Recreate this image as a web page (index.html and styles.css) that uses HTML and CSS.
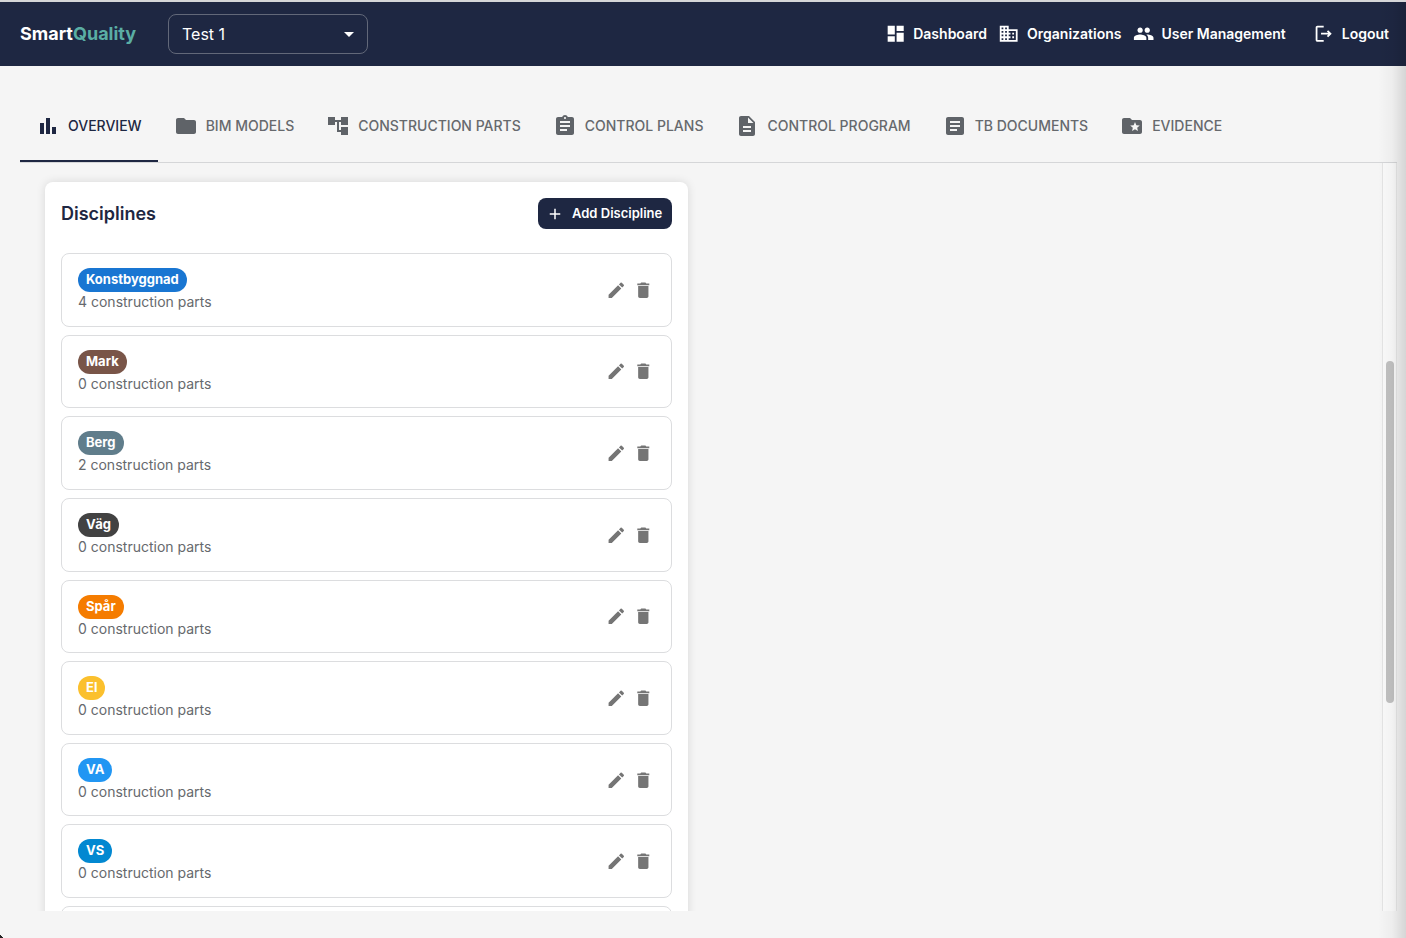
FILE: index.html
```
<!DOCTYPE html>
<html lang="en">
<head>
<meta charset="utf-8">
<title>SmartQuality</title>
<link rel="stylesheet" href="styles.css">
</head>
<body>
<svg width="0" height="0" class="defs">
  <symbol id="edit" viewBox="0 0 24 24"><path d="M3 17.25V21h3.75L17.81 9.94l-3.75-3.75zM20.71 7.04c.39-.39.39-1.02 0-1.41l-2.34-2.34a.9959.9959 0 0 0-1.41 0l-1.83 1.83 3.75 3.75z"/></symbol>
  <symbol id="trash" viewBox="0 0 24 24"><path d="M6 19c0 1.1.9 2 2 2h8c1.1 0 2-.9 2-2V7H6zM19 4h-3.5l-1-1h-5l-1 1H5v2h14z"/></symbol>
</svg>
<div class="app">
  <header class="header">
    <div class="brand">Smart<span class="brand-accent">Quality</span></div>
    <div class="select"><span>Test 1</span><svg class="caret" viewBox="0 0 24 24"><path d="m7 10 5 5 5-5z"/></svg></div>
    <nav class="nav">
      <a class="nav-item"><svg viewBox="0 0 24 24"><path d="M3 13h8V3H3zm0 8h8v-6H3zm10 0h8V11h-8zm0-18v6h8V3z"/></svg><span>Dashboard</span></a>
      <a class="nav-item"><svg viewBox="0 0 24 24"><path d="M12 7V3H2v18h20V7zM6 19H4v-2h2zm0-4H4v-2h2zm0-4H4V9h2zm0-4H4V5h2zm4 12H8v-2h2zm0-4H8v-2h2zm0-4H8V9h2zm0-4H8V5h2zm10 12h-8v-2h2v-2h-2v-2h2v-2h-2V9h8zm-2-8h-2v2h2zm0 4h-2v2h2z"/></svg><span>Organizations</span></a>
      <a class="nav-item"><svg viewBox="0 0 24 24"><path d="M16 11c1.66 0 2.99-1.34 2.99-3S17.66 5 16 5s-3 1.34-3 3 1.34 3 3 3m-8 0c1.66 0 2.99-1.34 2.99-3S9.66 5 8 5 5 6.34 5 8s1.340 3 3 3m0 2c-2.330 0-7 1.170-7 3.500V19h14v-2.500c0-2.330-4.670-3.500-7-3.500m8 0c-.29 0-.62.02-.97.050 1.160.840 1.970 1.970 1.970 3.450V19h6v-2.500c0-2.330-4.670-3.500-7-3.500"/></svg><span>User Management</span></a>
      <a class="nav-item nav-logout"><svg viewBox="0 0 24 24"><path d="m17 8-1.410 1.410L17.170 11H9v2h8.170l-1.580 1.580L17 16l4-4zM5 5h7V3H5c-1.100 0-2 .9-2 2v14c0 1.100.9 2 2 2h7v-2H5z"/></svg><span>Logout</span></a>
    </nav>
  </header>

  <div class="tabs">
    <div class="tab active"><svg viewBox="0 0 24 24"><path d="M4 9h4v11H4zm12 4h4v7h-4zm-6-9h4v16h-4z"/></svg><span>OVERVIEW</span></div>
    <div class="tab"><svg viewBox="0 0 24 24"><path d="M10 4H4c-1.100 0-1.990.9-1.990 2L2 18c0 1.100.9 2 2 2h16c1.100 0 2-.9 2-2V8c0-1.100-.9-2-2-2h-8z"/></svg><span>BIM MODELS</span></div>
    <div class="tab"><svg viewBox="0 0 24 24"><path d="M22 11V3h-7v3H9V3H2v8h7V8h2v10h4v3h7v-8h-7v3h-2V8h2v3z"/></svg><span>CONSTRUCTION PARTS</span></div>
    <div class="tab"><svg viewBox="0 0 24 24"><path d="M19 3h-4.180C14.400 1.840 13.300 1 12 1s-2.400.840-2.820 2H5c-1.100 0-2 .9-2 2v14c0 1.100.9 2 2 2h14c1.100 0 2-.9 2-2V5c0-1.100-.9-2-2-2m-7 0c.55 0 1 .45 1 1s-.45 1-1 1-1-.45-1-1 .45-1 1-1m2 14H7v-2h7zm3-4H7v-2h10zm0-4H7V7h10z"/></svg><span>CONTROL PLANS</span></div>
    <div class="tab"><svg viewBox="0 0 24 24"><path d="M14 2H6c-1.100 0-1.990.9-1.990 2L4 20c0 1.100.890 2 1.990 2H18c1.100 0 2-.9 2-2V8zm2 16H8v-2h8zm0-4H8v-2h8zm-3-5V3.500L18.500 9z"/></svg><span>CONTROL PROGRAM</span></div>
    <div class="tab"><svg viewBox="0 0 24 24"><path d="M19 3H5c-1.100 0-2 .9-2 2v14c0 1.100.9 2 2 2h14c1.100 0 2-.9 2-2V5c0-1.100-.9-2-2-2m-5 14H7v-2h7zm3-4H7v-2h10zm0-4H7V7h10z"/></svg><span>TB DOCUMENTS</span></div>
    <div class="tab"><svg viewBox="0 0 24 24"><path d="M20 6h-8l-2-2H4c-1.100 0-2 .9-2 2v12c0 1.100.9 2 2 2h16c1.100 0 2-.9 2-2V8c0-1.100-.9-2-2-2m-2.060 11L15 15.280 12.060 17l.780-3.330-2.590-2.240 3.410-.290L15 8l1.340 3.140 3.410.290-2.590 2.240z"/></svg><span>EVIDENCE</span></div>
  </div>

  <div class="viewport">
    <div class="content">
      <section class="panel">
        <div class="panel-head">
          <h2 class="title">Disciplines</h2>
          <button class="add"><svg viewBox="0 0 24 24"><path d="M19 13h-6v6h-2v-6H5v-2h6V5h2v6h6z"/></svg><span>Add Discipline</span></button>
        </div>
        <div class="list">
          <div class="row"><div class="info"><span class="chip konst">Konstbyggnad</span><span class="count">4 construction parts</span></div><div class="actions"><svg><use href="#edit"/></svg><svg><use href="#trash"/></svg></div></div>
          <div class="row"><div class="info"><span class="chip mark">Mark</span><span class="count">0 construction parts</span></div><div class="actions"><svg><use href="#edit"/></svg><svg><use href="#trash"/></svg></div></div>
          <div class="row"><div class="info"><span class="chip berg">Berg</span><span class="count">2 construction parts</span></div><div class="actions"><svg><use href="#edit"/></svg><svg><use href="#trash"/></svg></div></div>
          <div class="row"><div class="info"><span class="chip vag">Väg</span><span class="count">0 construction parts</span></div><div class="actions"><svg><use href="#edit"/></svg><svg><use href="#trash"/></svg></div></div>
          <div class="row"><div class="info"><span class="chip spar">Spår</span><span class="count">0 construction parts</span></div><div class="actions"><svg><use href="#edit"/></svg><svg><use href="#trash"/></svg></div></div>
          <div class="row"><div class="info"><span class="chip el">El</span><span class="count">0 construction parts</span></div><div class="actions"><svg><use href="#edit"/></svg><svg><use href="#trash"/></svg></div></div>
          <div class="row"><div class="info"><span class="chip va">VA</span><span class="count">0 construction parts</span></div><div class="actions"><svg><use href="#edit"/></svg><svg><use href="#trash"/></svg></div></div>
          <div class="row"><div class="info"><span class="chip vs">VS</span><span class="count">0 construction parts</span></div><div class="actions"><svg><use href="#edit"/></svg><svg><use href="#trash"/></svg></div></div>
          <div class="row"></div>
        </div>
      </section>
    </div>
    <div class="scrollbar"><div class="thumb"></div></div>
  </div>
  <div class="edge-shade"></div>
  <div class="corner"></div>
</div>
</body>
</html>
```
FILE: styles.css
```
* { box-sizing: border-box; }
body { margin: 0; font-family: Inter, "Liberation Sans", sans-serif; background: #f5f5f5; }
svg { display: block; flex: none; fill: currentColor; }
.defs { position: absolute; }
.app { position: relative; width: 1406px; height: 938px; overflow: hidden; display: flex; flex-direction: column; border-top: 2px solid #d5d6d8; }

.header { height: 64px; flex: none; background: #1e2742; color: #fff; display: flex; align-items: center; padding: 0 17px 0 20px; }
.brand { width: 148px; padding-bottom: 2px; font-size: 18px; font-weight: 700; white-space: nowrap; }
.brand-accent { color: #5aaea4; }
.select { width: 200px; height: 40px; border: 1px solid #626879; border-radius: 8px; display: flex; align-items: center; justify-content: space-between; padding: 0 6px 0 13px; font-size: 16px; }
.caret { width: 24px; height: 24px; }
.nav { margin-left: auto; display: flex; align-items: center; gap: 11.300px; font-size: 14px; font-weight: 600; white-space: nowrap; }
.nav-item { display: flex; align-items: center; gap: 7.300px; }
.nav-item svg { width: 21.400px; height: 21.400px; }
.nav-logout { margin-left: 16px; }

.tabs { flex: none; height: 97px; margin: 0 9px 0 20px; padding-top: 24px; border-bottom: 1px solid #d5d6d8; display: flex; font-size: 14px; font-weight: 500; color: #66696d; white-space: nowrap; }
.tab { display: flex; align-items: center; gap: 8px; height: 72px; padding: 2px 16px 0; border-bottom: 2px solid transparent; }
.tab svg { width: 24px; height: 24px; color: #5f6368; }
.tab span { padding-bottom: 1px; }
.tab.active, .tab.active svg { color: #1e2742; }
.tab.active { border-bottom-color: #1e2742; }

.viewport { flex: none; height: 748px; margin: 0 9px 0 20px; display: flex; overflow: hidden; }
.content { flex: 1; padding: 19px 25px 0; }
.panel { width: 643px; height: 800px; background: #fff; border-radius: 8px; padding: 16px; box-shadow: 0 0 10px rgba(0,0,0,.12); }
.panel-head { display: flex; align-items: center; justify-content: space-between; height: 31px; }
.title { margin: 0; font-size: 18px; font-weight: 600; color: #1e2742; }
.add { width: 134px; height: 31px; border: 0; border-radius: 8px; background: #1e2742; color: #fff; font: 600 13px Inter, "Liberation Sans", sans-serif; display: flex; align-items: center; gap: 8px; padding: 0 8px; white-space: nowrap; }
.add svg { width: 18px; height: 18px; }
.add span { padding-bottom: 2px; }
.list { margin-top: 23.940px; display: flex; flex-direction: column; gap: 8px; }
.row { flex: none; height: 73.645px; border: 1px solid #dcdddf; border-radius: 8px; display: flex; align-items: center; justify-content: space-between; padding: .5px 17.400px 0 16px; }
.info { display: flex; flex-direction: column; align-items: flex-start; }
.chip { height: 24px; line-height: 23px; border-radius: 12px; padding: 0 8px; color: #fff; font-size: 13px; font-weight: 700; }
.count { font-size: 14px; line-height: 20px; color: #66696d; }
.actions { display: flex; gap: 6.700px; color: #757575; }
.actions svg { width: 20.600px; height: 20.600px; }
.konst { background: #1976d2; }
.mark { background: #795548; }
.berg { background: #607d8b; }
.vag { background: #424242; }
.spar { background: #f57c00; }
.el { background: #fbc02d; }
.va { background: #2196f3; }
.vs { background: #0288d1; }

.scrollbar { width: 15px; border-left: 1px solid #e4e4e4; border-right: 1px solid #e8e8e8; background: #fafafa; padding: 198px 3px 0; }
.thumb { width: 8px; height: 342px; border-radius: 4px; background: #c1c1c1; }
.edge-shade { position: absolute; top: 0; right: 0; bottom: 0; width: 28px; background: linear-gradient(to right, rgba(0,0,0,0), rgba(0,0,0,.03) 50%, rgba(0,0,0,.13)); }
.corner { position: absolute; left: 0; bottom: 0; width: 3px; height: 3px; background: linear-gradient(45deg, #222 50%, transparent 52%); }
```
